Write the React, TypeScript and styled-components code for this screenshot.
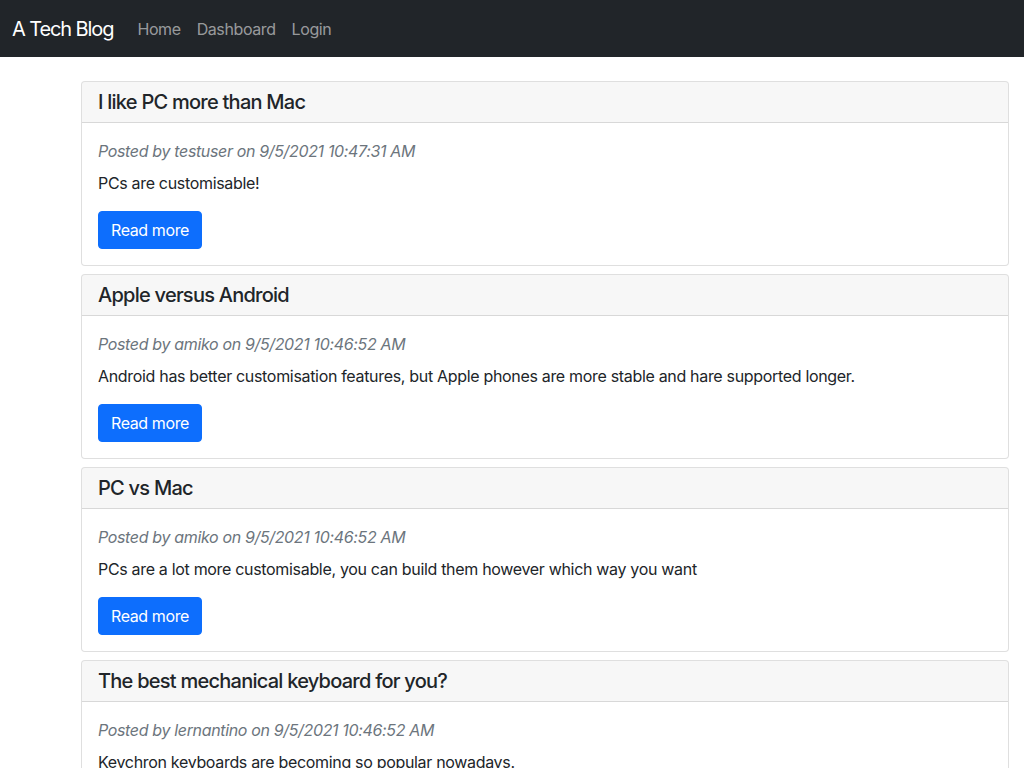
import React from "react";
import styled, { createGlobalStyle } from "styled-components";

const Global = createGlobalStyle`
  html, body { margin: 0; padding: 0; background: #fff; }
  body {
    font-family: Inter, "Noto Sans", "Liberation Sans", sans-serif;
    font-size: 16px;
    line-height: 1.5;
    color: #212529;
  }
  * { box-sizing: border-box; }
`;

const Navbar = styled.nav`
  background: #212529;
  height: 57px;
  padding: 8px 12px;
  display: flex;
  align-items: center;
`;

const Brand = styled.a`
  color: #fff;
  font-size: 20px;
  line-height: 30px;
  padding: 5px 0;
  margin-right: 16px;
  text-decoration: none;
  letter-spacing: -1.1px;
`;

const NavLinks = styled.div`
  display: flex;
`;

const NavLink = styled.a`
  color: rgba(255, 255, 255, 0.55);
  padding: 8px;
  text-decoration: none;
  letter-spacing: -0.4px;
`;

const Main = styled.main`
  padding: 24px 15px 24px 81px;
  display: flex;
  flex-direction: column;
  gap: 8px;
`;

const Card = styled.div`
  border: 1px solid rgba(0, 0, 0, 0.125);
  border-radius: 4px;
  background: #fff;
  overflow: hidden;
`;

const CardHeader = styled.h5`
  margin: 0;
  padding: 8px 16px;
  font-size: 20px;
  font-weight: 500;
  line-height: 1.2;
  background: rgba(0, 0, 0, 0.03);
  border-bottom: 1px solid rgba(0, 0, 0, 0.125);
  letter-spacing: -0.75px;
`;

const CardBody = styled.div`
  padding: 16px;
`;

const Meta = styled.p`
  margin: 0 0 8px;
  color: #6c757d;
  font-style: italic;
  letter-spacing: -0.35px;
`;

const Text = styled.p`
  margin: 0 0 16px;
  letter-spacing: -0.32px;
`;

const Button = styled.a`
  display: inline-block;
  background: #0d6efd;
  color: #fff;
  border: 1px solid #0d6efd;
  border-radius: 4px;
  padding: 6px 12px;
  line-height: 24px;
  text-decoration: none;
  letter-spacing: -0.4px;
`;

const posts = [
  {
    title: "I like PC more than Mac",
    author: "testuser",
    date: "9/5/2021 10:47:31 AM",
    body: "PCs are customisable!",
  },
  {
    title: "Apple versus Android",
    author: "amiko",
    date: "9/5/2021 10:46:52 AM",
    body:
      "Android has better customisation features, but Apple phones are more stable and hare supported longer.",
  },
  {
    title: "PC vs Mac",
    author: "amiko",
    date: "9/5/2021 10:46:52 AM",
    body: "PCs are a lot more customisable, you can build them however which way you want",
  },
  {
    title: "The best mechanical keyboard for you?",
    author: "lernantino",
    date: "9/5/2021 10:46:52 AM",
    body: "Keychron keyboards are becoming so popular nowadays.",
  },
];

export default function App() {
  return (
    <>
      <Global />
      <Navbar>
        <Brand href="#">A Tech Blog</Brand>
        <NavLinks>
          <NavLink href="#">Home</NavLink>
          <NavLink href="#">Dashboard</NavLink>
          <NavLink href="#">Login</NavLink>
        </NavLinks>
      </Navbar>
      <Main>
        {posts.map((p, i) => (
          <Card key={i}>
            <CardHeader>{p.title}</CardHeader>
            <CardBody>
              <Meta>
                Posted by {p.author} on {p.date}
              </Meta>
              <Text>{p.body}</Text>
              <Button href="#">Read more</Button>
            </CardBody>
          </Card>
        ))}
      </Main>
    </>
  );
}
